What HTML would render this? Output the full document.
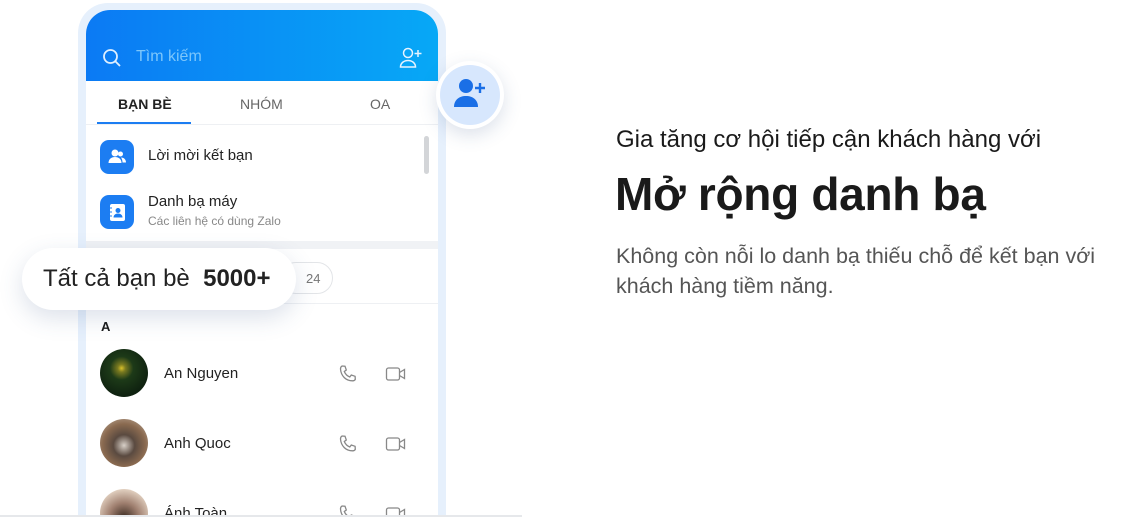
<!DOCTYPE html>
<html><head><meta charset="utf-8"><style>
*{margin:0;padding:0;box-sizing:border-box}
html,body{width:1141px;height:517px;overflow:hidden}
body{background:#fff;position:relative;font-family:"Liberation Sans",sans-serif;color:#1a1a1a}
.a{position:absolute}
.outer{left:78px;top:3px;width:368px;height:514px;background:#e6f0fc;border-radius:30px 30px 0 0}
.inner{left:86px;top:10px;width:352px;height:507px;background:#fff;border-radius:24px 24px 0 0;overflow:hidden}
.hdr{left:0;top:0;width:352px;height:71px;background:linear-gradient(90deg,#0b7af4,#07a8f6)}
.tab{font-size:14px;color:#666;top:86px}
.row{font-size:15px;color:#222}
.ic{width:34px;height:34px;border-radius:9px;background:#1c7df2}
.name{font-size:15px;color:#222}
.av{width:48px;height:48px;border-radius:50%}
</style></head><body>
<div class="a outer"></div>
<div class="a inner">
  <div class="a hdr">
    <svg class="a" style="left:16px;top:38px" width="20" height="20" viewBox="0 0 20 20" fill="none" stroke="#dfefff" stroke-width="1.8"><circle cx="8.5" cy="8.5" r="6.5"/><path d="M13.3 13.3L18 18"/></svg>
    <div class="a" style="left:50px;top:38px;font-size:16px;color:#7cc6fb">Tìm kiếm</div>
    <svg class="a" style="left:313px;top:37px" width="24" height="22" viewBox="0 0 24 22" fill="none" stroke="#e6f3ff" stroke-width="1.5"><circle cx="9" cy="6" r="4.5"/><path d="M1.5 20c0-4 3.5-6.5 7.5-6.5s7.5 2.5 7.5 6.5z"/><path d="M19 3v7M15.5 6.5h7"/></svg>
  </div>
  <div class="a tab" style="left:32px;color:#222;font-weight:bold">BẠN BÈ</div>
  <div class="a tab" style="left:154px">NHÓM</div>
  <div class="a tab" style="left:284px">OA</div>
  <div class="a" style="left:11px;top:112px;width:94px;height:2px;background:#1c7df2"></div>
  <div class="a" style="left:0;top:114px;width:352px;height:1px;background:#eef0f3"></div>
  <div class="a" style="left:338px;top:126px;width:5px;height:38px;border-radius:3px;background:#d3d5d8"></div>
  <div class="a ic" style="left:14px;top:130px"><svg width="34" height="34" viewBox="0 0 34 34" fill="#fff"><circle cx="15" cy="13" r="3.5"/><path d="M8.5 23c0-4 3-6 6.5-6s6.5 2 6.5 6z"/><circle cx="20.5" cy="14" r="2.5"/><path d="M21 17.5c3 0 5 2 5 5h-3.5c0-2-.5-3.5-1.5-5z"/></svg></div>
  <div class="a row" style="left:62px;top:137px">Lời mời kết bạn</div>
  <div class="a ic" style="left:14px;top:185px"><svg width="34" height="34" viewBox="0 0 34 34"><rect x="10" y="9" width="15" height="17" rx="2" fill="#fff"/><circle cx="18" cy="15.5" r="2.5" fill="#1c7df2"/><path d="M13.5 22.5c0-2.5 2-4 4.5-4s4.5 1.5 4.5 4z" fill="#1c7df2"/><path d="M10 13h2M10 17h2M10 21h2" stroke="#1c7df2" stroke-width="1"/></svg></div>
  <div class="a row" style="left:62px;top:183px">Danh bạ máy</div>
  <div class="a" style="left:62px;top:204px;font-size:12px;color:#888">Các liên hệ có dùng Zalo</div>
  <div class="a" style="left:0;top:231px;width:352px;height:8px;background:#f0f2f5"></div>
  <div class="a" style="left:194px;top:252px;width:53px;height:32px;border:1px solid #e3e5e8;border-radius:16px;font-size:13px;color:#777;padding:8px 0 0 25px">24</div>
  <div class="a" style="left:0;top:293px;width:352px;height:1px;background:#eef0f3"></div>
  <div class="a" style="left:15px;top:309px;font-size:13px;font-weight:bold">A</div>
  <div class="a av" style="left:14px;top:339px;background:radial-gradient(circle at 45% 40%,#d8c02a 0,#7a7a20 10%,#1d3a18 30%,#0f2210 70%)"></div>
  <div class="a name" style="left:78px;top:355px">An Nguyen</div>
  <div class="a av" style="left:14px;top:409px;background:radial-gradient(circle at 50% 55%,#d8d0c8 0,#5a4a40 30%,#8a6a50 60%,#c8b8a8 100%)"></div>
  <div class="a name" style="left:78px;top:425px">Anh Quoc</div>
  <div class="a av" style="left:14px;top:479px;background:radial-gradient(circle at 50% 60%,#3a2a20 0,#a08070 40%,#e8d8c8 80%)"></div>
  <div class="a name" style="left:78px;top:495px">Ánh Toàn</div>
  <svg class="a" style="left:252px;top:354px" width="20" height="20" viewBox="0 0 20 20" fill="none" stroke="#888" stroke-width="1.3"><path d="M4 2l3 .2 1.3 3.8-2 1.5c1 2.5 3 4.5 5.5 5.5l1.5-2 3.8 1.3.2 3c-.5 1-1.5 1.5-2.5 1.5C8 17 3 12 2.5 5 2.5 3.8 3 2.6 4 2z"/></svg>
  <svg class="a" style="left:299px;top:355px" width="22" height="18" viewBox="0 0 22 18" fill="none" stroke="#888" stroke-width="1.3"><rect x="1.5" y="3" width="13" height="12" rx="2"/><path d="M14.5 7.5l5-3v9l-5-3"/></svg>
  <svg class="a" style="left:252px;top:424px" width="20" height="20" viewBox="0 0 20 20" fill="none" stroke="#888" stroke-width="1.3"><path d="M4 2l3 .2 1.3 3.8-2 1.5c1 2.5 3 4.5 5.5 5.5l1.5-2 3.8 1.3.2 3c-.5 1-1.5 1.5-2.5 1.5C8 17 3 12 2.5 5 2.5 3.8 3 2.6 4 2z"/></svg>
  <svg class="a" style="left:299px;top:425px" width="22" height="18" viewBox="0 0 22 18" fill="none" stroke="#888" stroke-width="1.3"><rect x="1.5" y="3" width="13" height="12" rx="2"/><path d="M14.5 7.5l5-3v9l-5-3"/></svg>
  <svg class="a" style="left:252px;top:494px" width="20" height="20" viewBox="0 0 20 20" fill="none" stroke="#888" stroke-width="1.3"><path d="M4 2l3 .2 1.3 3.8-2 1.5c1 2.5 3 4.5 5.5 5.5l1.5-2 3.8 1.3.2 3c-.5 1-1.5 1.5-2.5 1.5C8 17 3 12 2.5 5 2.5 3.8 3 2.6 4 2z"/></svg>
  <svg class="a" style="left:299px;top:495px" width="22" height="18" viewBox="0 0 22 18" fill="none" stroke="#888" stroke-width="1.3"><rect x="1.5" y="3" width="13" height="12" rx="2"/><path d="M14.5 7.5l5-3v9l-5-3"/></svg>
</div>
<div class="a" style="left:22px;top:248px;width:274px;height:62px;border-radius:31px;background:#fff;box-shadow:0 8px 24px rgba(60,90,140,.18)"></div>
<div class="a" style="left:43px;top:265px;font-size:24px;color:#222;white-space:nowrap">Tất cả bạn bè&nbsp; <b>5000+</b></div>
<div class="a" style="left:436px;top:61px;width:68px;height:68px;border-radius:50%;background:#fff;box-shadow:0 6px 18px rgba(60,90,140,.18)"></div>
<div class="a" style="left:440px;top:65px;width:60px;height:60px;border-radius:50%;background:#d7e7fd"></div>
<svg class="a" style="left:452px;top:77px" width="38" height="32" viewBox="0 0 38 32" fill="#1a6fe6"><circle cx="14" cy="9" r="7"/><path d="M2 30c0-7 5-11 12-11s12 4 12 11z"/><path d="M28 6v10M23 11h10" stroke="#1a6fe6" stroke-width="2.4"/></svg>
<div class="a" style="left:0;top:515px;width:522px;height:2px;background:#e6e8eb"></div>
<div class="a" style="left:616px;top:126px;font-size:24px;color:#1a1a1a;white-space:nowrap">Gia tăng cơ hội tiếp cận khách hàng với</div>
<div class="a" style="left:615px;top:167px;font-size:46px;font-weight:bold;color:#1a1a1a;letter-spacing:-0.3px">Mở rộng danh bạ</div>
<div class="a" style="left:616px;top:241px;font-size:21.5px;line-height:30px;color:#555;width:525px;white-space:nowrap">Không còn nỗi lo danh bạ thiếu chỗ để kết bạn với<br>khách hàng tiềm năng.</div>
</body></html>
